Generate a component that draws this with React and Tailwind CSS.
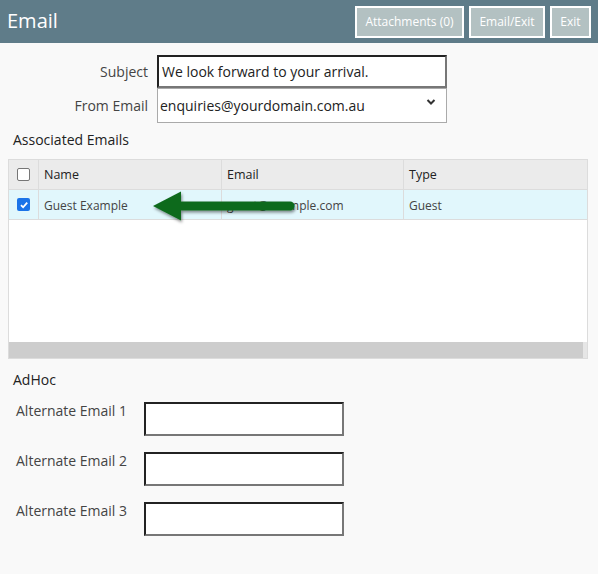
import React from "react";

function Btn({ children, w }) {
  return (
    <button
      className={`h-[32px] border-2 border-white bg-[#b3c1c2] text-white text-[12px] leading-none px-0 ${w}`}
      style={{ fontFamily: "'Open Sans', sans-serif" }}
    >
      {children}
    </button>
  );
}

function InsetBox({ className = "", children }) {
  return (
    <div
      className={`bg-white border-2 border-t-[#222] border-l-[#222] border-b-[#777] border-r-[#777] ${className}`}
    >
      {children}
    </div>
  );
}

export default function App() {
  return (
    <div
      className="w-[598px] h-[574px] bg-[#f9f9f9] text-[#333] overflow-hidden"
      style={{ fontFamily: "'Open Sans', sans-serif" }}
    >
      {/* Header */}
      <div className="h-[43px] bg-[#5f7c89] flex items-center justify-between pl-[7px] pr-[7px]">
        <div className="text-white text-[20px] leading-none pb-[1px]">Email</div>
        <div className="flex gap-[5px] items-center">
          <Btn w="w-[109px]">Attachments (0)</Btn>
          <Btn w="w-[76px]">Email/Exit</Btn>
          <Btn w="w-[41px]">Exit</Btn>
        </div>
      </div>

      {/* Subject / From */}
      <div className="pt-[12px] flex flex-col">
        <div className="flex items-center h-[33px]">
          <div className="w-[148px] text-right text-[14px] pr-0 text-[#444]">Subject</div>
          <InsetBox className="ml-[9px] w-[290px] h-[33px] flex items-center pl-[3px] text-[14px] text-[#222]">
            We look forward to your arrival.
          </InsetBox>
        </div>
        <div className="flex items-center h-[35px]">
          <div className="w-[148px] text-right text-[14px] text-[#444]">From Email</div>
          <div className="ml-[9px] w-[290px] h-[35px] bg-white border border-[#aaa] flex items-center justify-between pl-[2px] pr-[10px] text-[14px] text-[#222]">
            <span>enquiries@yourdomain.com.au</span>
            <svg width="10" height="8" viewBox="0 0 10 8" className="mb-[8px]">
              <path d="M1.5 2 L5 5.5 L8.5 2" fill="none" stroke="#333" strokeWidth="2" />
            </svg>
          </div>
        </div>
      </div>

      {/* Associated Emails */}
      <div className="pl-[13px] pb-[4px] text-[14px] text-[#222] h-[36px] flex items-center">Associated Emails</div>

      <div className="relative ml-[8px] w-[580px] h-[200px] bg-white border border-[#dcdcdc] flex flex-col">
        <div className="flex h-[30px] bg-[#ebebeb] border-b border-[#dcdcdc] text-[12.5px] text-[#222]">
          <div className="w-[30px] border-r border-[#dcdcdc] flex items-center justify-center">
            <div className="w-[13px] h-[13px] border border-[#767676] rounded-[2px] bg-white" />
          </div>
          <div className="w-[183px] border-r border-[#dcdcdc] flex items-center pl-[5px] pt-[1px]">Name</div>
          <div className="w-[182px] border-r border-[#dcdcdc] flex items-center pl-[5px] pt-[1px]">Email</div>
          <div className="flex-1 flex items-center pl-[5px] pt-[1px]">Type</div>
        </div>
        <div className="flex h-[30px] bg-[#e1f7fc] border-b border-[#dcdcdc] text-[12px] text-[#444]">
          <div className="w-[30px] border-r border-[#dcdcdc] flex items-center justify-center">
            <div className="w-[13px] h-[13px] rounded-[2px] bg-[#1a73e8] flex items-center justify-center">
              <svg width="10" height="10" viewBox="0 0 10 10">
                <path d="M2 5.2 L4.1 7.3 L8.2 2.6" fill="none" stroke="#fff" strokeWidth="1.8" />
              </svg>
            </div>
          </div>
          <div className="w-[183px] border-r border-[#dcdcdc] flex items-center pl-[5px] pt-[2px]">Guest Example</div>
          <div className="w-[182px] border-r border-[#dcdcdc] flex items-center pl-[5px] pt-[2px]">guest@example.com</div>
          <div className="flex-1 flex items-center pl-[5px] pt-[2px]">Guest</div>
        </div>
        <div className="flex-1" />
        <div className="h-[16px] flex">
          <div className="flex-1 bg-[#cdcdcd]" />
          <div className="w-[4px] bg-[#e6e6e6]" />
        </div>

        {/* Arrow overlay */}
        <svg
          className="absolute left-[132px] top-[28px]"
          width="170"
          height="44"
          viewBox="0 0 170 44"
        >
          <defs>
            <filter id="sh" x="-20%" y="-40%" width="140%" height="180%">
              <feDropShadow dx="1" dy="2" stdDeviation="1.5" floodColor="#000" floodOpacity="0.45" />
            </filter>
          </defs>
          <g filter="url(#sh)">
            <path d="M12 18 L40 3.5 L40 13.5 L149 13.5 A4.5 4.5 0 0 1 149 22.5 L40 22.5 L40 32.5 Z" fill="#0f6a1e" />
          </g>
        </svg>
      </div>

      {/* AdHoc */}
      <div className="pl-[13px] pt-[9px] text-[14px] text-[#222] h-[32px] flex items-center">AdHoc</div>
      <div className="flex flex-col gap-[16px] pt-[11px]">
        {[1, 2, 3].map((n) => (
          <div key={n} className="flex items-start">
            <div className="w-[144px] pl-[16px] text-[14px] leading-[18px] text-[#444]">Alternate Email {n}</div>
            <InsetBox className="w-[200px] h-[34px]" />
          </div>
        ))}
      </div>
    </div>
  );
}
